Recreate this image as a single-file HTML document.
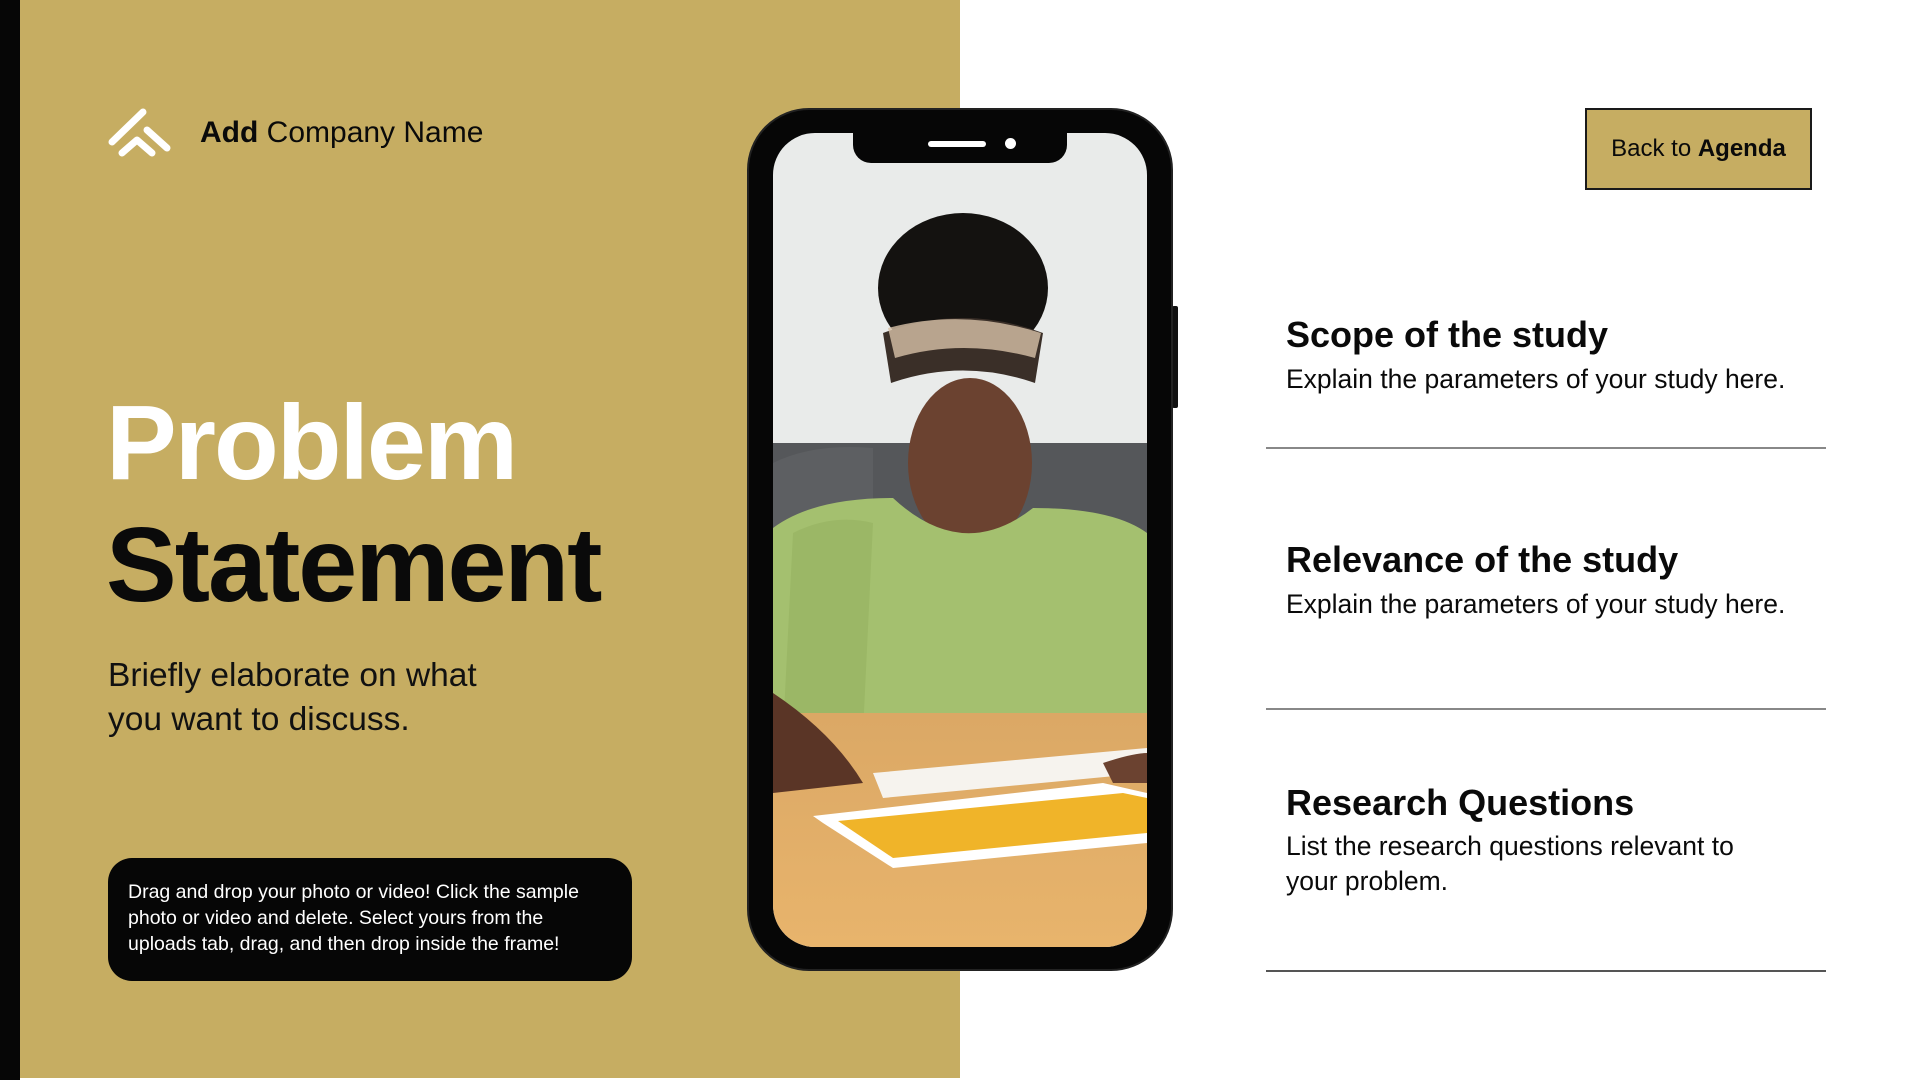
<!DOCTYPE html>
<html><head><meta charset="utf-8"><style>
*{margin:0;padding:0;box-sizing:border-box}
body{width:1920px;height:1080px;position:relative;overflow:hidden;background:#fff;font-family:"Liberation Sans",sans-serif;color:#0a0a0a}
.abs{position:absolute}
</style></head><body>
<div class="abs" style="left:0;top:0;width:20px;height:1080px;background:#060606"></div>
<div class="abs" style="left:20px;top:0;width:940px;height:1078px;background:#C6AD62"></div>

<svg class="abs" style="left:100px;top:100px" width="80" height="70" viewBox="100 100 80 70">
<g stroke="#fff" stroke-width="7" stroke-linecap="round" stroke-linejoin="round" fill="none">
<line x1="143" y1="112" x2="112" y2="142"/>
<polyline points="122,153 137,140 152,153"/>
<line x1="147" y1="130" x2="167" y2="148"/>
</g></svg>
<div class="abs" style="left:200px;top:114px;font-size:30px;line-height:38px;color:#0a0a0a"><b>Add</b> Company Name</div>

<div class="abs" style="left:106px;top:382px;font-size:106px;font-weight:bold;line-height:122px;color:#fff;letter-spacing:-2px">Problem</div>
<div class="abs" style="left:106px;top:504px;font-size:106px;font-weight:bold;line-height:122px;color:#0a0a0a;letter-spacing:-2px">Statement</div>
<div class="abs" style="left:108px;top:654px;font-size:33.5px;line-height:44px;color:#111">Briefly elaborate on what<br>you want to discuss.</div>

<div class="abs" style="left:108px;top:858px;width:524px;height:123px;background:#060606;border-radius:24px;color:#fff;font-size:19.5px;line-height:26px;padding:21px 0 0 20px">Drag and drop your photo or video! Click the sample<br>photo or video and delete. Select yours from the<br>uploads tab, drag, and then drop inside the frame!</div>

<!-- phone -->
<div class="abs" style="left:1172px;top:306px;width:6px;height:102px;background:#111;border-radius:2px"></div>
<div class="abs" style="left:747px;top:108px;width:426px;height:863px;background:#060606;border-radius:62px;border:2px solid #222"></div>
<svg class="abs" style="left:773px;top:133px" width="374" height="814" viewBox="0 0 374 814">
<defs><clipPath id="c"><rect width="374" height="814" rx="42"/></clipPath>
<linearGradient id="t" x1="0" y1="0" x2="0" y2="1"><stop offset="0" stop-color="#dba865"/><stop offset="1" stop-color="#e8b46c"/></linearGradient></defs>
<g clip-path="url(#c)">
<rect width="374" height="814" fill="#e9ebea"/>
<rect y="310" width="374" height="120" fill="#55575a"/>
<path d="M0 330 Q40 310 100 315 L100 430 L0 430Z" fill="#5d5f62"/>
<ellipse cx="190" cy="155" rx="85" ry="75" fill="#141210"/>
<path d="M110 200 Q190 170 270 200 L262 250 Q190 225 118 250Z" fill="#3a2f28"/>
<path d="M115 195 Q190 175 268 200 L262 225 Q190 205 122 225Z" fill="#d8c2a8" opacity=".8"/>
<ellipse cx="197" cy="330" rx="62" ry="85" fill="#6b4230"/>
<rect x="170" y="390" width="55" height="50" fill="#6b4230"/>
<path d="M0 395 Q40 365 120 365 Q190 430 260 375 Q340 375 374 400 L374 600 L0 600Z" fill="#a4c06f"/>
<path d="M20 400 Q60 380 100 390 L90 600 L10 600Z" fill="#9bb766"/>
<rect y="580" width="374" height="234" fill="url(#t)"/>
<path d="M0 560 Q60 600 90 650 L0 660Z" fill="#5a3526"/>
<path d="M40 683 L330 650 L374 660 L374 710 L120 735 L50 690Z" fill="#fff"/>
<path d="M65 688 L350 660 L374 665 L374 700 L120 725Z" fill="#f0b429"/>
<path d="M100 640 L374 615 L374 640 L110 665Z" fill="#f6f3ee"/>
<path d="M330 630 Q360 620 374 620 L374 650 L340 650Z" fill="#6b4230"/>
</g></svg>
<div class="abs" style="left:853px;top:131px;width:214px;height:32px;background:#060606;border-radius:0 0 18px 18px"></div>
<div class="abs" style="left:928px;top:141px;width:58px;height:6px;background:#fff;border-radius:3px"></div>
<div class="abs" style="left:1005px;top:138px;width:11px;height:11px;background:#fff;border-radius:50%"></div>

<!-- right -->
<div class="abs" style="left:1585px;top:108px;width:227px;height:82px;background:#C6AD62;border:2px solid #1a1a1a;font-size:24px;line-height:78px;text-align:center">Back to <b>Agenda</b></div>

<div class="abs" style="left:1286px;top:314px;font-size:36px;font-weight:bold;line-height:42px">Scope of the study</div>
<div class="abs" style="left:1286px;top:362px;font-size:26.5px;line-height:34px">Explain the parameters of your study here.</div>
<div class="abs" style="left:1266px;top:447px;width:560px;height:2px;background:#888"></div>

<div class="abs" style="left:1286px;top:539px;font-size:36px;font-weight:bold;line-height:42px">Relevance of the study</div>
<div class="abs" style="left:1286px;top:587px;font-size:26.5px;line-height:34px">Explain the parameters of your study here.</div>
<div class="abs" style="left:1266px;top:708px;width:560px;height:2px;background:#888"></div>

<div class="abs" style="left:1286px;top:782px;font-size:36px;font-weight:bold;line-height:42px">Research Questions</div>
<div class="abs" style="left:1286px;top:829px;font-size:26.5px;line-height:35px">List the research questions relevant to<br>your problem.</div>
<div class="abs" style="left:1266px;top:970px;width:560px;height:2px;background:#555"></div>
</body></html>
